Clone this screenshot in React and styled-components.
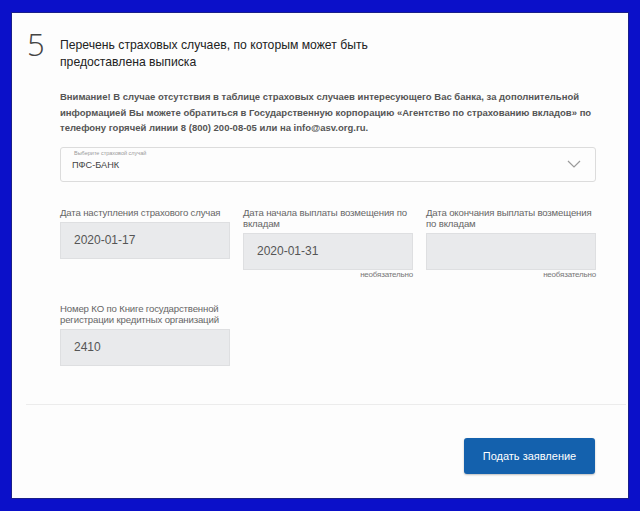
import styled, { createGlobalStyle } from 'styled-components';

const GlobalStyle = createGlobalStyle`
  html, body {
    margin: 0;
    padding: 0;
    background: #0b10c9;
  }
  body {
    font-family: "Liberation Sans", Arial, sans-serif;
  }
`;

const Page = styled.div`
  width: 640px;
  height: 511px;
  box-sizing: border-box;
  padding: 12px 11px 12px 11px;
  background: #0b10c9;
`;

const Card = styled.div`
  height: 100%;
  box-sizing: border-box;
  background: #fdfdfd;
  border: 1px solid #1a1f8a;
  display: flex;
  flex-direction: column;
  padding: 14px 0 24px 0;
`;

const Header = styled.div`
  display: flex;
  align-items: flex-start;
  padding-left: 15px;
`;

const StepNumber = styled.div`
  width: 33px;
  font-family: "Open Sans", "Liberation Sans", sans-serif;
  font-weight: 300;
  font-size: 31px;
  line-height: 34px;
  color: #444;
`;

const Title = styled.h2`
  margin: 10px 0 0;
  font-weight: 400;
  font-size: 12.2px;
  line-height: 17px;
  color: #222;
  max-width: 320px;
`;

const Body = styled.div`
  padding: 0 32px 0 48px;
`;

const Notice = styled.p`
  margin: 18px 0 0;
  font-weight: 700;
  font-size: 9.5px;
  line-height: 15.5px;
  color: #555;
`;

const Select = styled.div`
  margin-top: 11px;
  height: 35px;
  box-sizing: border-box;
  border: 1px solid #dcdcdc;
  border-radius: 3px;
  display: flex;
  align-items: center;
  justify-content: space-between;
  padding: 0 14px 0 11px;
`;

const SelectText = styled.div`
  display: flex;
  flex-direction: column;
  margin-bottom: 9px;
`;

const SelectLabel = styled.span`
  font-size: 5.5px;
  color: #999;
  padding-left: 2px;
  margin-bottom: 4px;
`;

const SelectValue = styled.span`
  font-size: 9.2px;
  color: #444;
`;

const Row = styled.div`
  display: grid;
  grid-template-columns: repeat(3, 170px);
  column-gap: 13px;
  margin-top: ${(p) => p.$top}px;
`;

const Field = styled.div`
  display: flex;
  flex-direction: column;
`;

const Label = styled.label`
  font-size: 9.6px;
  letter-spacing: -0.15px;
  line-height: 11px;
  color: #666;
  min-height: 11px;
  margin-bottom: 4px;
`;

const Input = styled.div`
  height: 37px;
  box-sizing: border-box;
  background: #e9eaec;
  border: 1px solid #dedfe1;
  display: flex;
  align-items: center;
  padding-left: 13px;
  font-size: 12px;
  color: #555;
`;

const Hint = styled.span`
  align-self: flex-end;
  font-size: 8px;
  letter-spacing: -0.2px;
  line-height: 9px;
  color: #777;
`;

const Divider = styled.hr`
  margin: auto 2px 0 14px;
  border: 0;
  border-top: 1px solid #ececec;
  width: auto;
`;

const Footer = styled.div`
  display: flex;
  justify-content: flex-end;
  padding: 33px 33px 0 0;
`;

const Button = styled.button`
  width: 131px;
  height: 36px;
  border: 0;
  border-radius: 3px;
  background: #1461ad;
  color: #fff;
  font-family: "Liberation Sans", Arial, sans-serif;
  font-size: 11px;
  box-shadow: 0 1px 2px rgba(0, 0, 0, 0.25);
`;

const Chevron = () => (
  <svg width="14" height="8" viewBox="0 0 14 8" fill="none">
    <path d="M1 1l6 6 6-6" stroke="#9a9a9a" strokeWidth="1.2" />
  </svg>
);

export default function App() {
  return (
    <>
      <GlobalStyle />
      <Page>
        <Card>
          <Header>
            <StepNumber>5</StepNumber>
            <Title>Перечень страховых случаев, по которым может быть предоставлена выписка</Title>
          </Header>
          <Body>
            <Notice>
              Внимание! В случае отсутствия в таблице страховых случаев интересующего Вас банка, за дополнительной
              информацией Вы можете обратиться в Государственную корпорацию «Агентство по страхованию вкладов» по
              телефону горячей линии 8 (800) 200-08-05 или на info@asv.org.ru.
            </Notice>
            <Select>
              <SelectText>
                <SelectLabel>Выберите страховой случай</SelectLabel>
                <SelectValue>ПФС-БАНК</SelectValue>
              </SelectText>
              <Chevron />
            </Select>
            <Row $top={25}>
              <Field>
                <Label>Дата наступления страхового случая</Label>
                <Input>2020-01-17</Input>
              </Field>
              <Field>
                <Label>Дата начала выплаты возмещения по вкладам</Label>
                <Input>2020-01-31</Input>
                <Hint>необязательно</Hint>
              </Field>
              <Field>
                <Label>Дата окончания выплаты возмещения по вкладам</Label>
                <Input />
                <Hint>необязательно</Hint>
              </Field>
            </Row>
            <Row $top={24}>
              <Field>
                <Label>Номер КО по Книге государственной регистрации кредитных организаций</Label>
                <Input>2410</Input>
              </Field>
            </Row>
          </Body>
          <Divider />
          <Footer>
            <Button>Подать заявление</Button>
          </Footer>
        </Card>
      </Page>
    </>
  );
}
